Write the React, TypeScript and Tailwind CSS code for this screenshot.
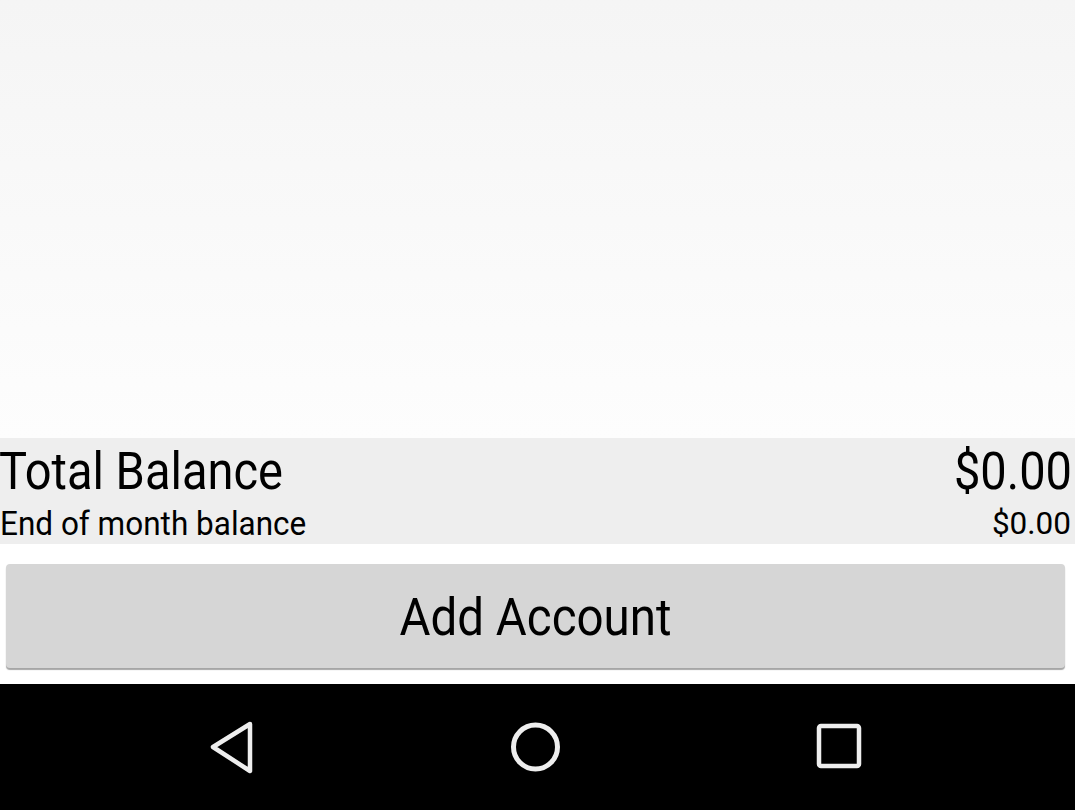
import React from "react";

export default function App() {
  return (
    <div className="w-[1075px] h-[810px] flex flex-col bg-white overflow-hidden" style={{ fontFamily: "Roboto, 'Liberation Sans', sans-serif" }}>
      <div className="h-[438px] bg-gradient-to-b from-[#f5f5f5] to-[#fdfdfd]" />
      <div className="h-[106px] bg-[#eeeeee] text-black flex flex-col">
        <div className="flex justify-between items-center h-[64px]">
          <span className="text-[47px] leading-none -ml-[1px] scale-y-[1.1] origin-center inline-block">Total Balance</span>
          <span className="text-[47px] leading-none mr-[3px] scale-y-[1.1] origin-center inline-block">$0.00</span>
        </div>
        <div className="flex justify-between items-center h-[32px] mt-[6px]">
          <span className="text-[31.5px] leading-none scale-y-[1.08] inline-block">End of month balance</span>
          <span className="text-[31.5px] leading-none mr-[4px] inline-block">$0.00</span>
        </div>
      </div>
      <div className="h-[140px] bg-white px-[6px] pt-[20px]">
        <div className="h-[104px] w-[1059px] rounded-[4px] bg-[#d6d6d6] shadow-[0_2px_1px_rgba(0,0,0,0.35)] flex items-center justify-center pt-[4px]">
          <span className="text-[47.5px] leading-none text-black scale-y-[1.1] inline-block">Add Account</span>
        </div>
      </div>
      <div className="flex-1 bg-black relative">
        <svg width="1075" height="126" viewBox="0 0 1075 126" className="absolute inset-0">
          <path d="M250 40 L213 63 L250 87 Z" fill="none" stroke="#eeeeee" strokeWidth="4.5" strokeLinejoin="round" />
          <circle cx="535.5" cy="63" r="22" fill="none" stroke="#eeeeee" strokeWidth="5" />
          <rect x="819" y="42" width="40" height="40" rx="2" fill="none" stroke="#eeeeee" strokeWidth="4.5" />
        </svg>
      </div>
    </div>
  );
}
